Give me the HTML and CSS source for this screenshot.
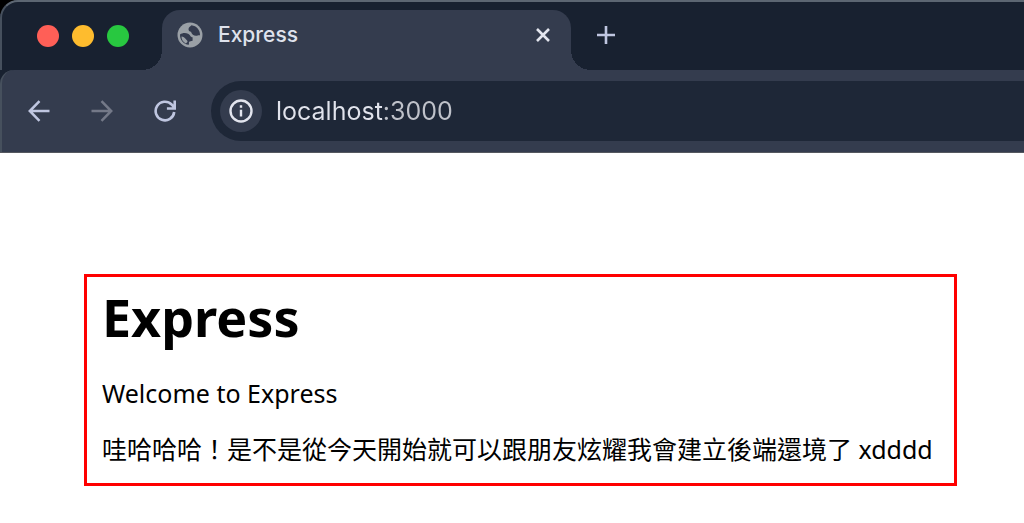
FILE: index.html
```html
<!DOCTYPE html>
<html lang="zh-Hant">
<head>
    <meta charset="UTF-8">
    <meta name="viewport" content="width=device-width, initial-scale=1.0">
    <title>Express</title>
    <link rel="stylesheet" href="styles.css">
</head>
<body>
    <header class="browser">
        <div class="tab-bar">
            <div class="window-controls">
                <button type="button" class="dot dot-close" aria-label="Close window"></button>
                <button type="button" class="dot dot-minimize" aria-label="Minimize window"></button>
                <button type="button" class="dot dot-zoom" aria-label="Zoom window"></button>
            </div>
            <div class="tab">
                <svg class="tab-icon" viewBox="0 0 26 26" aria-hidden="true">
                    <circle cx="13" cy="13" r="12.5" fill="#9aa0a6"/>
                    <path d="M14.500 3.200C13 4.500 11.500 5.500 11.500 7.200c0 1.500 1 2.300 2.500 2.500.800 2.600 2.500 4 5 4 1.500 0 2.500-.800 4-.500C23.200 8 19.500 3.800 14.500 3.200z" fill="#343b4e"/>
                    <path d="M3 12.500c2-1.600 5.500-2 8-.8 2.500 1.200 2.200 3.300 4.600 3.600v3.400c-1.200.600-3 .300-3.600 1.300-.300.900.200 1.800-.200 2.800C6.500 22.300 2.800 18 3 12.500z" fill="#343b4e"/>
                    <path d="M4.500 14.500c1.800.200 3.200 1 4 2.300.700 1.200 2.300 1.700 2 3.300l-1.800 1.400C6 19.800 4.300 17.500 4.500 14.500z" fill="#9aa0a6"/>
                </svg>
                <span class="tab-title">Express</span>
                <button type="button" class="icon-btn tab-close" aria-label="Close tab">
                    <svg width="14" height="14" viewBox="0 0 14 14" fill="none" stroke="#e3e5ee" stroke-width="2.600"><path d="M1 1l12 12M13 1L1 13"/></svg>
                </button>
            </div>
            <button type="button" class="icon-btn new-tab" aria-label="New tab">
                <svg width="18" height="18" viewBox="0 0 18 18" fill="none" stroke="#bfc6e0" stroke-width="2.600"><path d="M9 0v18M0 9h18"/></svg>
            </button>
        </div>

        <div class="toolbar">
            <nav class="nav-buttons">
                <button type="button" class="icon-btn" aria-label="Back">
                    <svg width="22" height="22" viewBox="0 0 22 22" fill="none" stroke="#bfc6e0" stroke-width="2.500"><path d="M21.500 11H2M11.500 1.200L1.800 11l9.700 9.800"/></svg>
                </button>
                <button type="button" class="icon-btn" aria-label="Forward" disabled>
                    <svg width="22" height="22" viewBox="0 0 22 22" fill="none" stroke="#747988" stroke-width="2.500"><path d="M.5 11H20M10.500 1.200l9.700 9.800-9.700 9.800"/></svg>
                </button>
                <button type="button" class="icon-btn" aria-label="Reload">
                    <svg width="22" height="22" viewBox="0 0 22 22" fill="none" stroke="#bfc6e0" stroke-width="2.600"><path d="M20.200 12A9.300 9.300 0 1 1 17.600 4.500L20.600 8M20.700.5v8h-7.800"/></svg>
                </button>
            </nav>
            <div class="address-bar">
                <button type="button" class="icon-btn site-info" aria-label="Site information">
                    <svg width="24" height="24" viewBox="0 0 24 24" fill="none" stroke="#e3e5ee" stroke-width="2.400"><circle cx="12" cy="12" r="10.500"/><path d="M12 10.800v6.700M12 6.300v2.400"/></svg>
                </button>
                <input type="text" class="address-input" aria-label="Address" value="localhost:3000" spellcheck="false">
            </div>
        </div>
    </header>

    <main class="page">
        <div class="highlight">
            <h1>Express</h1>
            <p>Welcome to Express</p>
            <p>哇哈哈哈！是不是從今天開始就可以跟朋友炫耀我會建立後端還境了 xdddd</p>
        </div>
    </main>
</body>
</html>
```
FILE: styles.css
```css
* {
    box-sizing: border-box;
}

body {
    margin: 0;
    background: #fff;
    color: #000;
    font-family: "Noto Sans", "Noto Sans CJK TC", sans-serif;
}

/* ===== Browser window ===== */
.browser {
    background: linear-gradient(135deg, #000 10px, #182130 10px);
    border-bottom: 1px solid #55585f;
    font-family: Inter, "Liberation Sans", sans-serif;
}

.icon-btn {
    display: flex;
    align-items: center;
    justify-content: center;
    padding: 0;
    border: none;
    background: none;
}

.tab-bar {
    display: flex;
    align-items: flex-end;
    height: 70px;
    border-top: 2px solid #5c6672;
    border-left: 2px solid #46505d;
    border-top-left-radius: 18px;
    background: #182130;
}

.window-controls {
    display: flex;
    gap: 13px;
    width: 160px;
    padding: 0 0 23px 35px;
}

.dot {
    width: 22px;
    height: 22px;
    padding: 0;
    border: none;
    border-radius: 50%;
}

.dot-close {
    background: #ff5f57;
}

.dot-minimize {
    background: #febc2e;
}

.dot-zoom {
    background: #28c840;
}

/* ===== Tab ===== */
.tab {
    position: relative;
    display: flex;
    align-items: center;
    width: 409px;
    height: 60px;
    padding: 0 21px 10px 15px;
    border-radius: 18px 18px 0 0;
    background: #343c4e;
}

/* Curved feet on both sides of the tab */
.tab::before,
.tab::after {
    content: "";
    position: absolute;
    bottom: 0;
    width: 20px;
    height: 20px;
}

.tab::before {
    right: 100%;
    background: radial-gradient(circle at 0 0, #182130 20px, #343c4e 20px);
}

.tab::after {
    left: 100%;
    background: radial-gradient(circle at 100% 0, #182130 20px, #343c4e 20px);
}

.tab-icon {
    width: 26px;
    height: 26px;
}

.tab-title {
    flex: 1;
    margin-left: 15px;
    color: #dfe2ec;
    font-size: 21px;
    font-weight: 500;
    line-height: 26px;
}

.new-tab {
    margin: 0 0 26px 26px;
}

/* ===== Toolbar ===== */
.toolbar {
    display: flex;
    align-items: center;
    height: 82px;
    border-left: 2px solid #46505d;
    border-top-left-radius: 14px;
    background: #343c4e;
}

.nav-buttons {
    display: flex;
    gap: 41px;
    padding: 0 35px 0 26px;
}

.address-bar {
    flex: 1;
    display: flex;
    align-items: center;
    height: 60px;
    padding-left: 9px;
    border-radius: 30px 0 0 30px;
    background: #1e2737;
}

.site-info {
    width: 42px;
    height: 42px;
    border-radius: 50%;
    background: #343c4e;
}

/* The port is dimmer than the host name */
.address-input {
    flex: 1;
    min-width: 0;
    margin-left: 14px;
    padding: 0;
    border: none;
    outline: none;
    background: linear-gradient(90deg, #e1e3ec 106px, #bfc2ca 106px);
    background-clip: text;
    -webkit-background-clip: text;
    color: transparent;
    font-family: inherit;
    font-size: 25px;
    line-height: 32px;
}

/* ===== Page content ===== */
.page {
    padding: 121px 67px 37px 84px;
}

.highlight {
    padding: 10px 15px 20px;
    border: 3px solid #f00;
}

h1 {
    margin: 0 0 32px;
    font-size: 52px;
    line-height: 60px;
}

p {
    margin: 0;
    font-size: 25px;
    line-height: 28px;
}

p + p {
    margin-top: 28px;
}
```
